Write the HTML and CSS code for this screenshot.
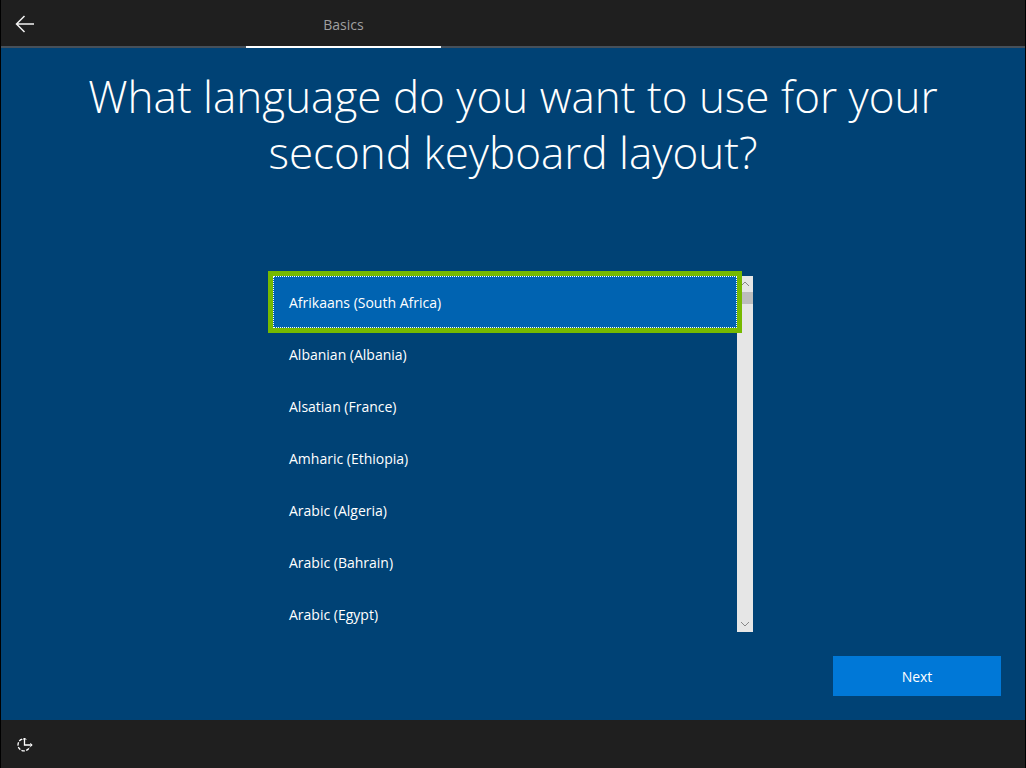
FILE: index.html
```html
<!DOCTYPE html>
<html lang="en">
<head>
  <meta charset="UTF-8">
  <title>Keyboard layout</title>
  <link rel="stylesheet" href="styles.css">
</head>
<body>
  <header class="header">
    <button class="icon-button" type="button" aria-label="Back">
      <svg width="20" height="18" viewBox="0 0 20 18" fill="none" stroke="#f2f2f2" stroke-width="1.5">
        <path d="M1.5 9H19M9.5 1L1.5 9l8 8" />
      </svg>
    </button>
    <nav class="tabs">
      <a class="tab active" href="#basics">Basics</a>
    </nav>
  </header>

  <main class="content" id="basics">
    <h1 class="title">What language do you want to use for your second keyboard layout?</h1>

    <div class="picker">
      <div class="list" role="radiogroup" aria-label="Language">
        <label class="item"><input type="radio" name="language" checked>Afrikaans (South Africa)</label>
        <label class="item"><input type="radio" name="language">Albanian (Albania)</label>
        <label class="item"><input type="radio" name="language">Alsatian (France)</label>
        <label class="item"><input type="radio" name="language">Amharic (Ethiopia)</label>
        <label class="item"><input type="radio" name="language">Arabic (Algeria)</label>
        <label class="item"><input type="radio" name="language">Arabic (Bahrain)</label>
        <label class="item"><input type="radio" name="language">Arabic (Egypt)</label>
      </div>
      <div class="scrollbar">
        <button class="scroll-button" type="button" aria-label="Scroll up">
          <svg width="10" height="6" viewBox="0 0 10 6" fill="none" stroke="#888"><path d="M1 5l4-4 4 4" /></svg>
        </button>
        <div class="thumb"></div>
        <button class="scroll-button down" type="button" aria-label="Scroll down">
          <svg width="10" height="6" viewBox="0 0 10 6" fill="none" stroke="#888"><path d="M1 1l4 4 4-4" /></svg>
        </button>
      </div>
    </div>

    <div class="actions">
      <button class="next" type="button">Next</button>
    </div>
  </main>

  <footer class="footer">
    <button class="icon-button" type="button" aria-label="Ease of access">
      <svg width="18" height="16" viewBox="0 0 18 16" fill="none" stroke="#fff" stroke-width="1.3">
        <path d="M6 3.2A6 6 0 1 0 13.6 11" stroke-dasharray="3.4 1.3" />
        <path d="M8.5 2v7H16" />
        <path d="M6.8 3.8L8.5 2l1.7 1.8M14.4 7.2L16.2 9l-1.8 1.8" stroke-width="1" />
      </svg>
    </button>
  </footer>
</body>
</html>
```
FILE: styles.css
```css
* { box-sizing: border-box; }
body { font-family: "Open Sans", "Noto Sans", sans-serif; font-size: 14px; margin: 0; min-height: 100vh; display: flex; flex-direction: column; background: #004275; color: white; border: solid #000; border-width: 0 1px; }
button { font: inherit; color: inherit; border: 0; padding: 0; cursor: pointer; }
svg { display: block; }

.header { height: 48px; display: flex; background: #1f1f1f; box-shadow: inset 0 -2px #46505a; }
.icon-button { width: 48px; height: 48px; display: grid; place-items: center; background: none; }
.tabs { display: flex; margin-left: 197px; }
.tab { width: 195px; display: grid; place-items: center; color: #a0a0a0; text-decoration: none; }
.tab.active { border-bottom: 2px solid white; padding-top: 2px; }

.content { flex: 1; display: flex; flex-direction: column; padding: 20px 24px 24px; }
.title { margin: 0 auto; max-width: 900px; min-height: 208px; font-size: 44px; font-weight: 300; line-height: 56px; text-align: center; }

.picker { display: flex; width: 480px; height: 356px; margin: 0 auto; }
.list { flex: 1; }
.item { display: flex; align-items: center; height: 52px; padding: 0 16px; cursor: pointer; }
.item input { appearance: none; width: 0; height: 0; margin: 0; }
.item:has(:checked) { position: relative; background: #0063b1; border: 1px dotted white; padding: 0 15px; box-shadow: 0 0 0 5px #76b900; }

.scrollbar { width: 16px; display: flex; flex-direction: column; background: #e6e6e6; }
.scroll-button { height: 16px; display: grid; place-items: center; background: none; }
.scroll-button.down { margin-top: auto; }
.thumb { height: 12px; background: #bdbdbd; }

.actions { display: flex; justify-content: flex-end; margin-top: auto; }
.next { width: 168px; height: 40px; background: #0078d7; }

.footer { height: 48px; background: #1f1f1f; }
```
